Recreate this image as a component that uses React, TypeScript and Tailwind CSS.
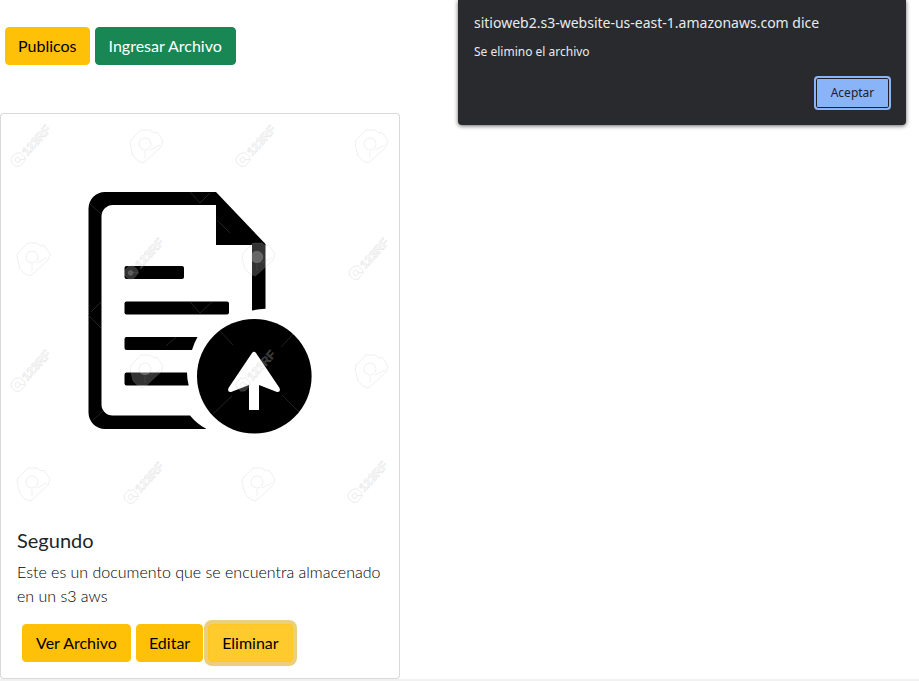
import React from "react";

type Point = [number, number];

const cameraMarks: Point[] = [
  [146, 146], [371, 146], [33, 259], [258, 259],
  [146, 371], [371, 371], [33, 484], [258, 484],
];

const textMarks: Point[] = [
  [31, 145], [256, 145], [144, 258], [369, 258],
  [31, 370], [256, 370], [144, 482], [368, 481],
];

const hairlines =
  "M90 204L101 214M190 192L200 203L210 193M217 220L230 233M91 312L101 302M88 315L101 328M93 420L103 411M190 302L200 313L212 302M166 346L176 337M220 331L233 345M281 347L293 334M213 414L232 396M282 395L299 412";

function CameraMark({ at: [x, y] }: { at: Point }) {
  return (
    <g transform={`translate(${x} ${y})`} strokeLinejoin="round">
      <path
        d="M-16-2L-15-6L-5-16L4-16L8-13L11-14L17-5L15 1L1 14L-3 17L-8 15L-13 10Z"
        fill="#fff"
        fillOpacity="0.2"
        stroke="#999"
        strokeOpacity="0.16"
      />
      <circle cx="-1" cy="-2" r="6" fill="#fff" fillOpacity="0.25" stroke="#999" strokeOpacity="0.16" />
      <path d="M4 4L14-1M-1 5L-1 12" fill="none" stroke="#999" strokeOpacity="0.14" />
    </g>
  );
}

function TextMark({ at: [x, y] }: { at: Point }) {
  return (
    <g
      transform={`translate(${x} ${y}) rotate(-48)`}
      fill="#fff"
      fillOpacity="0.2"
      stroke="#999"
      strokeOpacity="0.22"
      strokeWidth="0.8"
    >
      <path d="M-26-3L-23-6H-17L-13-3V3L-15 6H-23L-26 3Z" />
      <circle cx="-20" cy="0" r="2.5" />
      <path d="M-18 2L-15 5" />
      <text x="-11" y="5" className="font-['Liberation_Sans',sans-serif] text-[12px] font-bold">
        123RF
      </text>
    </g>
  );
}

function DocumentPicture() {
  return (
    <svg viewBox="1 114 398 398" className="block w-full rounded-t-[3px]" role="img" aria-label="Documento">
      <path d="M206.5 429H105A16.5 16.5 0 0 1 88.5 412.5V208.500A16.500 16.500 0 0 1 105 192H216L265.500 244V308.700Q258 309 252 310.500V245H216V205H113A11.500 11.500 0 0 0 101.500 216.500V404.500A11 11 0 0 0 112.500 415.500H190Q197 424 206.500 429Z" />
      <rect x="124.500" y="266" width="59.500" height="13" rx="2" />
      <rect x="124.500" y="301.500" width="104.500" height="13" rx="2" />
      <path d="M126.500 337H197.500Q194 343 192 350H126.500Q124.500 350 124.500 348V339Q124.500 337 126.500 337Z" />
      <path d="M126.500 372.500H187Q187 379 188.700 385.500H126.500Q124.500 385.500 124.500 383.500V374.500Q124.500 372.500 126.500 372.500Z" />
      <circle cx="254.300" cy="376.300" r="57.300" />
      <path
        d="M252 353Q254 350.500 256 353L279.500 388Q281 392.500 277 392L259 385V410H249V385L231 392Q227 392.500 228.500 388Z"
        fill="#fff"
      />
      <path d={hairlines} fill="none" stroke="#444" strokeWidth="0.5" />
      {cameraMarks.map((p) => (
        <CameraMark key={p.join()} at={p} />
      ))}
      {textMarks.map((p) => (
        <TextMark key={p.join()} at={p} />
      ))}
    </svg>
  );
}

function Button({ children, className }: { children: React.ReactNode; className: string }) {
  return (
    <button type="button" className={`rounded-sm border py-1.5 text-base ${className}`}>
      {children}
    </button>
  );
}

const warning = "border-[#ffc107] bg-[#ffc107] text-black";

export default function App() {
  return (
    <div className="relative min-h-screen bg-white font-['Lato',sans-serif] text-base text-[#212529]">
      <nav className="flex gap-[5px] px-[5px] pt-[27px] pb-12">
        <Button className={`px-3 ${warning}`}>Publicos</Button>
        <Button className="border-[#198754] bg-[#198754] px-[13px] text-white">Ingresar Archivo</Button>
      </nav>

      <main>
        <article className="w-full max-w-[400px] rounded-sm border border-black/15 bg-white">
          <DocumentPicture />
          <div className="p-4">
            <h5 className="mb-2 text-xl leading-6">Segundo</h5>
            <p className="mb-4 font-light text-black">Este es un documento que se encuentra almacenado en un s3 aws</p>
            <div className="flex gap-[5px] pl-[5px]">
              <Button className={`px-[13px] ${warning}`}>Ver Archivo</Button>
              <Button className={`px-3 ${warning}`}>Editar</Button>
              <Button className="border-[#ffc720] bg-[#ffca2c] px-[13px] text-black ring-4 ring-[#ebcf7e]">Eliminar</Button>
            </div>
          </div>
        </article>
      </main>
      <footer className="h-0.5 bg-[#f1f1f1]" />

      <section
        role="alertdialog"
        aria-labelledby="alert-title"
        aria-describedby="alert-text"
        className="absolute top-0 right-[13px] w-[448px] rounded-b-sm bg-[#292a2d] pt-3 pr-[15px] pb-[15px] pl-4 font-['Noto_Sans',sans-serif] text-[#e8eaed] shadow-[0_1px_4px_rgba(0,0,0,0.6)]"
      >
        <h2 id="alert-title" className="text-[14px] leading-[22px]">
          sitioweb2.s3-website-us-east-1.amazonaws.com dice
        </h2>
        <p id="alert-text" className="mt-2 text-[12px] leading-5">
          Se elimino el archivo
        </p>
        <div className="mt-3.5 flex justify-end">
          <button
            type="button"
            className="h-[34px] w-[77px] rounded-sm border-2 border-[#8ab4f8] bg-[#8ab4f8] text-[12px] text-[#202124] inset-ring inset-ring-[#202124]"
          >
            Aceptar
          </button>
        </div>
      </section>
    </div>
  );
}
